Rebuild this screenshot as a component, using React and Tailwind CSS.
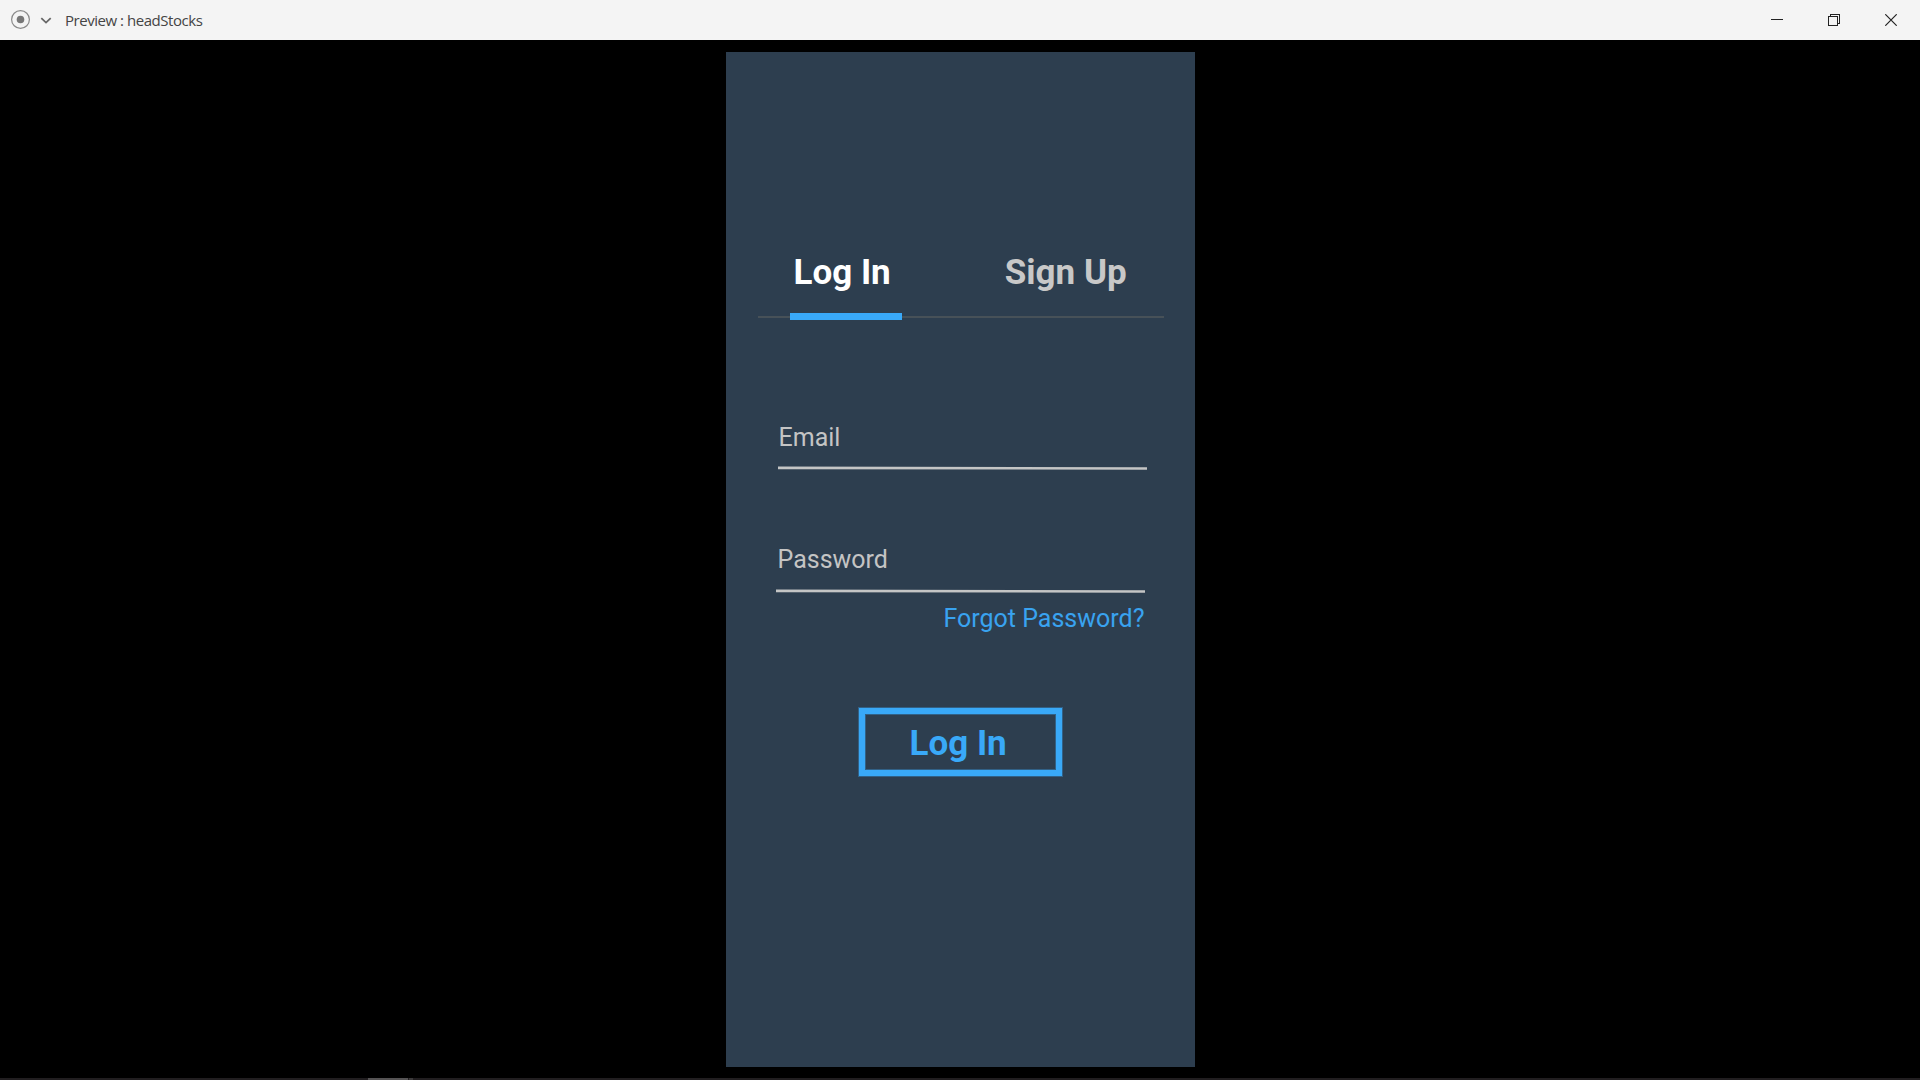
function TitleBar() {
  return (
    <header className="flex h-10 w-full items-center bg-[#f4f4f4] text-[#444444]">
      <svg className="ml-[10px] h-5 w-5" viewBox="0 0 20 20" fill="none">
        <circle cx="10.5" cy="9.5" r="8.9" stroke="#8a8a8a" strokeWidth="1.2" />
        <circle cx="10.5" cy="9.5" r="3.8" fill="#777777" />
      </svg>
      <svg className="ml-[10px] h-5 w-3" viewBox="0 0 12 20" fill="none">
        <path d="M1.3 8.2 6 12.6l4.7-4.4" stroke="#666666" strokeWidth="1.8" />
      </svg>
      <h1 className="ml-[13px] whitespace-nowrap font-['Open_Sans',sans-serif] text-[15px] leading-10 tracking-[-0.46px]">
        Preview : headStocks
      </h1>
      <div className="ml-auto mr-px flex h-10 items-center">
        <button className="flex h-10 w-[57px] items-center justify-center" aria-label="Minimize">
          <svg width="12" height="12" shapeRendering="crispEdges">
            <path d="M0 5.5h12" stroke="#222" />
          </svg>
        </button>
        <button className="flex h-10 w-[57px] items-center justify-center" aria-label="Restore">
          <svg width="12" height="12" fill="none" stroke="#222" shapeRendering="crispEdges">
            <path d="M.5 2.5h9v9h-9zM2.5 2.5v-2h9v9h-2" />
          </svg>
        </button>
        <button className="flex h-10 w-[57px] items-center justify-center" aria-label="Close">
          <svg width="12" height="12" fill="none" stroke="#222" strokeWidth="1.2">
            <path d="M.3.3l11.4 11.4M11.7.3.3 11.7" />
          </svg>
        </button>
      </div>
    </header>
  );
}

function Underline() {
  return (
    <svg className="block h-1 w-[369px]" viewBox="0 0 369 4">
      <path d="M0 1.9 369 2.5" stroke="#c4c5c5" strokeWidth="2.6" />
    </svg>
  );
}

export default function App() {
  return (
    <div className="flex h-screen w-full flex-col overflow-hidden bg-black">
      <TitleBar />
      <main className="mx-auto mt-3 h-[1015px] w-[469px] bg-[#2d3e4f] font-['Roboto',sans-serif]">
        <nav className="ml-8 mr-[31px] pt-[201px]">
          <div className="flex h-[60px] whitespace-nowrap text-[35px] font-bold leading-10">
            <span className="ml-9 text-white">Log In</span>
            <span className="ml-[114px] text-[#c8c8c8]">Sign Up</span>
          </div>
          <div className="flex h-[7px] items-center">
            <div className="h-[2px] w-8 bg-[#475158]" />
            <div className="h-[7px] w-28 bg-[#39a9f8]" />
            <div className="h-[2px] flex-1 bg-[#475158]" />
          </div>
        </nav>
        <section className="ml-[52px] mt-[102px]">
          <div className="h-11 pl-px text-[25px] leading-8 text-[#c4c4c4]">Email</div>
          <Underline />
        </section>
        <section className="ml-[50px] mt-[74px]">
          <div className="h-[45px] pl-0.5 text-[25px] leading-8 text-[#c4c4c4]">Password</div>
          <Underline />
        </section>
        <div className="ml-[218px] mt-[10px] whitespace-nowrap text-[25px] leading-8 text-[#39a3f0]">
          Forgot Password?
        </div>
        <button className="ml-[133px] mt-[73px] flex h-[68px] w-[203px] border-[6px] border-[#39a9f8] pl-[45px] pt-[10px] text-[35px] font-bold leading-10 text-[#39a9f8] shadow-[0_0_0_1px_#39a9f855,inset_0_0_0_1px_#39a9f855]">
          <span className="whitespace-nowrap">Log In</span>
        </button>
      </main>
      <footer className="mt-auto flex h-0.5 bg-[#211e20] pl-[368px]">
        <div className="h-0.5 w-10 bg-[#555354]" />
        <div className="ml-px h-0.5 w-1 bg-[#3c3a3b]" />
      </footer>
    </div>
  );
}
